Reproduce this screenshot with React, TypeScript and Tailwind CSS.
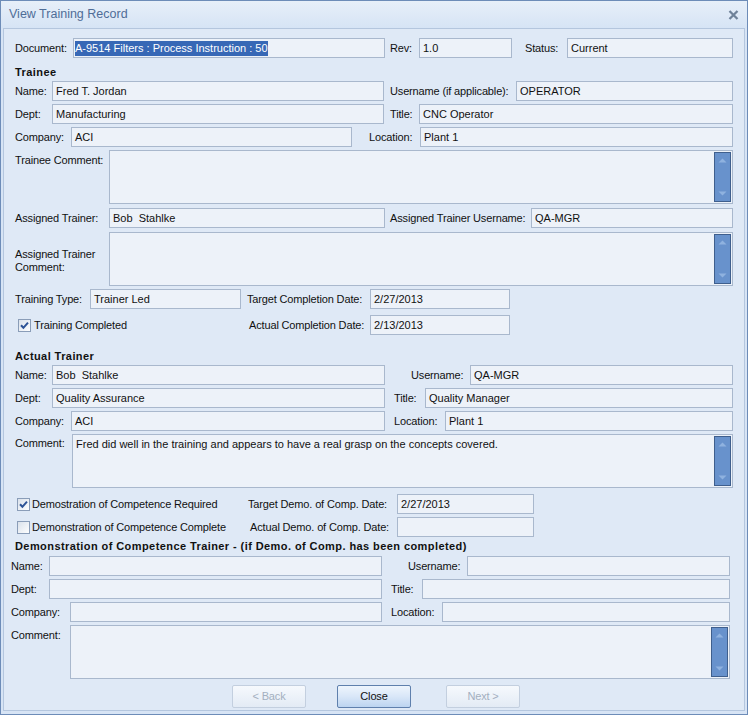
import React from "react";

type P = { c?: string; children?: React.ReactNode };

function L({ c = "", children }: P) {
  return <div className={`shrink-0 whitespace-nowrap ${c}`}>{children}</div>;
}

function F({ c = "", children }: P) {
  return (
    <div
      className={`shrink-0 h-[20px] border border-[#a9b8cd] bg-[#edf2f9] flex items-center pl-[3px] whitespace-nowrap overflow-hidden tracking-normal ${c}`}
    >
      {children}
    </div>
  );
}

function Scroll() {
  return (
    <div className="shrink-0 w-[17px] my-[1px] mr-[1px] border border-[#3f5f8d] bg-[#6892cc] flex flex-col justify-between items-center py-[5px]">
      <svg width="9" height="5" viewBox="0 0 9 5">
        <path d="M0.5 4.5 L4.5 0.5 L8.5 4.5 Z" fill="#8fb2df" />
      </svg>
      <svg width="9" height="5" viewBox="0 0 9 5">
        <path d="M0.5 0.5 L4.5 4.5 L8.5 0.5 Z" fill="#8fb2df" />
      </svg>
    </div>
  );
}

function TA({ c = "", children }: P) {
  return (
    <div className={`shrink-0 h-[54px] border border-[#a9b8cd] bg-[#edf2f9] flex tracking-normal ${c}`}>
      <div className="flex-1 pl-[3px] pt-[3px] leading-[13px]">{children}</div>
      <Scroll />
    </div>
  );
}

function Check({ checked }: { checked?: boolean }) {
  return (
    <svg width="13" height="13" viewBox="0 0 13 13" className="shrink-0">
      <defs>
        <linearGradient id="cbg" x1="0" y1="0" x2="1" y2="1">
          <stop offset="0" stopColor="#d8e0ea" />
          <stop offset="1" stopColor="#ffffff" />
        </linearGradient>
      </defs>
      <rect x="0.5" y="0.5" width="12" height="12" fill="url(#cbg)" stroke="#8a9db8" />
      {checked && (
        <path d="M3 6.3 L5.4 8.8 L10 3.6" fill="none" stroke="#2d5396" strokeWidth="2" />
      )}
    </svg>
  );
}

function Btn({ c = "", children }: P) {
  return (
    <div
      className={`w-[74px] h-[23px] flex items-center justify-center rounded-[2px] border ${c}`}
    >
      {children}
    </div>
  );
}

const row = "flex items-center h-[20px]";
const head = "font-bold tracking-[0.42px]";

export default function App() {
  return (
    <div className="w-[748px] h-[715px] border border-[#6d8cb8] bg-[#d7e4f5] px-[2px] pb-[3px] flex flex-col font-['Liberation_Sans',Arial,sans-serif] text-[11px] leading-[13px] tracking-[-0.15px] text-[#111]">
      <div className="h-[27px] shrink-0 -mx-[2px] bg-linear-to-b from-[#e7eff9] to-[#d6e4f5] flex items-center justify-between pl-[8px] pr-[8px]">
        <span className="text-[12.5px] tracking-normal text-[#4f6d97]">View Training Record</span>
        <svg width="11" height="10" viewBox="0 0 11 10">
          <path d="M1.5 1 L9.5 9 M9.5 1 L1.5 9" stroke="#6f8299" strokeWidth="2.3" />
        </svg>
      </div>
      <div className="flex-1 border border-[#b4c6de] bg-[#dfe9f6] flex flex-col">
        <div className="pl-[11px]">
          <div className={`${row} mt-[9px]`}>
            <L c="w-[58px]">Document:</L>
            <F c="w-[312px] !pl-[1px]">
              <span className="bg-[#3768b6] text-white leading-[15px]">A-9514 Filters : Process Instruction : 50</span>
            </F>
            <L c="w-[34px] pl-[5px]">Rev:</L>
            <F c="w-[93px]">1.0</F>
            <L c="w-[55px] pl-[13px]">Status:</L>
            <F c="w-[166px]">Current</F>
          </div>

          <div className={`h-[23px] flex items-end pb-[2px] ${head}`}>Trainee</div>
          <div className={row}>
            <L c="w-[37px]">Name:</L>
            <F c="w-[332px]">Fred T. Jordan</F>
            <L c="w-[132px] pl-[6px]">Username (if applicable):</L>
            <F c="w-[217px]">OPERATOR</F>
          </div>
          <div className={`${row} mt-[3px]`}>
            <L c="w-[37px]">Dept:</L>
            <F c="w-[332px]">Manufacturing</F>
            <L c="w-[35px] pl-[6px]">Title:</L>
            <F c="w-[314px]">CNC Operator</F>
          </div>
          <div className={`${row} mt-[3px]`}>
            <L c="w-[56px]">Company:</L>
            <F c="w-[281px]">ACI</F>
            <L c="w-[68px] pl-[17px]">Location:</L>
            <F c="w-[313px]">Plant 1</F>
          </div>
          <div className="flex items-start mt-[3px]">
            <L c="w-[94px] pt-[4px]">Trainee Comment:</L>
            <TA c="w-[624px]" />
          </div>
          <div className={`${row} mt-[4px]`}>
            <L c="w-[94px]">Assigned Trainer:</L>
            <F c="w-[276px]">Bob&nbsp; Stahlke</F>
            <L c="w-[146px] pl-[5px]">Assigned Trainer Username:</L>
            <F c="w-[202px]">QA-MGR</F>
          </div>
          <div className="flex items-center mt-[4px]">
            <L c="w-[94px] pt-[3px]">
              <div>Assigned Trainer</div>
              <div>Comment:</div>
            </L>
            <TA c="w-[624px]" />
          </div>
          <div className={`${row} mt-[3px]`}>
            <L c="w-[75px]">Training Type:</L>
            <F c="w-[151px]">Trainer Led</F>
            <L c="w-[129px] pl-[6px]">Target Completion Date:</L>
            <F c="w-[140px]">2/27/2013</F>
          </div>
          <div className={`${row} mt-[6px]`}>
            <div className="w-[234px] shrink-0 flex items-center gap-[3px] pl-[3px]">
              <Check checked />
              <span>Training Completed</span>
            </div>
            <L c="w-[121px]">Actual Completion Date:</L>
            <F c="w-[140px]">2/13/2013</F>
          </div>

          <div className={`h-[30px] flex items-end pb-[2px] ${head}`}>Actual Trainer</div>
          <div className={row}>
            <L c="w-[37px]">Name:</L>
            <F c="w-[333px]">Bob&nbsp; Stahlke</F>
            <L c="w-[85px] pl-[26px]">Username:</L>
            <F c="w-[263px]">QA-MGR</F>
          </div>
          <div className={`${row} mt-[3px]`}>
            <L c="w-[37px]">Dept:</L>
            <F c="w-[333px]">Quality Assurance</F>
            <L c="w-[40px] pl-[9px]">Title:</L>
            <F c="w-[308px]">Quality Manager</F>
          </div>
          <div className={`${row} mt-[3px]`}>
            <L c="w-[56px]">Company:</L>
            <F c="w-[314px]">ACI</F>
            <L c="w-[60px] pl-[9px]">Location:</L>
            <F c="w-[288px]">Plant 1</F>
          </div>
          <div className="flex items-start mt-[3px]">
            <L c="w-[57px] pt-[3px]">Comment:</L>
            <TA c="w-[661px]">
              Fred did well in the training and appears to have a real grasp on the concepts covered.
            </TA>
          </div>
          <div className={`${row} mt-[6px]`}>
            <div className="w-[233px] shrink-0 flex items-center gap-[2px] pl-[2px]">
              <Check checked />
              <span>Demostration of Competence Required</span>
            </div>
            <L c="w-[149px]">Target Demo. of Comp. Date:</L>
            <F c="w-[137px]">2/27/2013</F>
          </div>
          <div className={`${row} mt-[3px]`}>
            <div className="w-[235px] shrink-0 flex items-center gap-[2px] pl-[2px]">
              <Check />
              <span>Demonstration of Competence Complete</span>
            </div>
            <L c="w-[147px]">Actual Demo. of Comp. Date:</L>
            <F c="w-[137px]" />
          </div>
        </div>

        <div className="pl-[7px]">
          <div className={`h-[19px] flex items-end pb-[3px] pl-[4px] ${head}`}>
            Demonstration of Competence Trainer - (if Demo. of Comp. has been completed)
          </div>
          <div className={row}>
            <L c="w-[38px]">Name:</L>
            <F c="w-[333px]" />
            <L c="w-[85px] pl-[26px]">Username:</L>
            <F c="w-[263px]" />
          </div>
          <div className={`${row} mt-[3px]`}>
            <L c="w-[38px]">Dept:</L>
            <F c="w-[333px]" />
            <L c="w-[40px] pl-[9px]">Title:</L>
            <F c="w-[308px]" />
          </div>
          <div className={`${row} mt-[3px]`}>
            <L c="w-[59px]">Company:</L>
            <F c="w-[312px]" />
            <L c="w-[60px] pl-[9px]">Location:</L>
            <F c="w-[288px]" />
          </div>
          <div className="flex items-start mt-[3px]">
            <L c="w-[59px] pt-[4px]">Comment:</L>
            <TA c="w-[660px]" />
          </div>
        </div>

        <div className="flex justify-center pl-[4px] mt-[6px]">
          <Btn c="border-[#c3cfdf] bg-linear-to-b from-[#f6f9fd] to-[#e3ebf5] text-[#a3afbf]">&lt; Back</Btn>
          <Btn c="ml-[31px] border-[#5f80ad] bg-linear-to-b from-[#eef5fd] via-[#d9e7f8] to-[#bcd4f0] text-[#111]">Close</Btn>
          <Btn c="ml-[35px] border-[#c3cfdf] bg-linear-to-b from-[#f6f9fd] to-[#e3ebf5] text-[#a3afbf]">Next &gt;</Btn>
        </div>
      </div>
    </div>
  );
}
